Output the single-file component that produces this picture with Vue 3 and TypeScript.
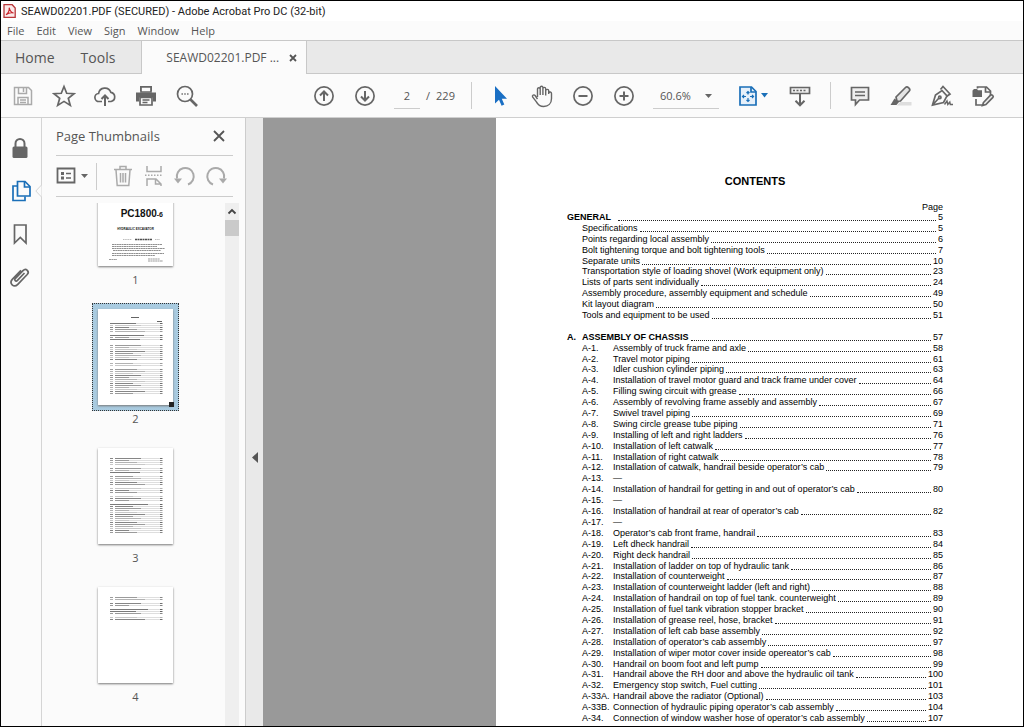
<script setup lang="ts">
import { ref } from 'vue'

interface TocRow {
  kind: 'head' | 'sub' | 'chapter' | 'entry' | 'gap'
  code?: string
  text?: string
  page?: string
}

const menus = ['File', 'Edit', 'View', 'Sign', 'Window', 'Help']
const pageNumber = ref('2')
const zoom = ref('60.6%')

const general: [string, string][] = [
  ['Specifications', '5'],
  ['Points regarding local assembly', '6'],
  ['Bolt tightening torque and bolt tightening tools', '7'],
  ['Separate units', '10'],
  ['Transportation style of loading shovel (Work equipment only)', '23'],
  ['Lists of parts sent individually', '24'],
  ['Assembly procedure, assembly equipment and schedule', '49'],
  ['Kit layout diagram', '50'],
  ['Tools and equipment to be used', '51'],
]

const chassis: [string, string, string][] = [
  ['A-1.', 'Assembly of truck frame and axle', '58'],
  ['A-2.', 'Travel motor piping', '61'],
  ['A-3.', 'Idler cushion cylinder piping', '63'],
  ['A-4.', 'Installation of travel motor guard and track frame under cover', '64'],
  ['A-5.', 'Filling swing circuit with grease', '66'],
  ['A-6.', 'Assembly of revolving frame assebly and assembly', '67'],
  ['A-7.', 'Swivel travel piping', '69'],
  ['A-8.', 'Swing circle grease tube piping', '71'],
  ['A-9.', 'Installing of left and right ladders', '76'],
  ['A-10.', 'Installation of left catwalk', '77'],
  ['A-11.', 'Installation of right catwalk', '78'],
  ['A-12.', 'Installation of catwalk, handrail beside operator’s cab', '79'],
  ['A-13.', '—', ''],
  ['A-14.', 'Installation of handrail for getting in and out of operator’s cab', '80'],
  ['A-15.', '—', ''],
  ['A-16.', 'Installation of handrail at rear of operator’s cab', '82'],
  ['A-17.', '—', ''],
  ['A-18.', 'Operator’s cab front frame, handrail', '83'],
  ['A-19.', 'Left dheck handrail', '84'],
  ['A-20.', 'Right deck handrail', '85'],
  ['A-21.', 'Installation of ladder on top of hydraulic tank', '86'],
  ['A-22.', 'Installation of counterweight', '87'],
  ['A-23.', 'Installation of counterweight ladder (left and right)', '88'],
  ['A-24.', 'Installation of handrail on top of fuel tank. counterweight', '89'],
  ['A-25.', 'Installation of fuel tank vibration stopper bracket', '90'],
  ['A-26.', 'Installation of grease reel, hose, bracket', '91'],
  ['A-27.', 'Installation of left cab base assembly', '92'],
  ['A-28.', 'Installation of operator’s cab assembly', '97'],
  ['A-29.', 'Installation of wiper motor cover inside opereator’s cab', '98'],
  ['A-30.', 'Handrail on boom foot and left pump', '99'],
  ['A-31.', 'Handrail above the RH door and above the hydraulic oil tank', '100'],
  ['A-32.', 'Emergency stop switch, Fuel cutting', '101'],
  ['A-33A.', 'Handrail above the radiator (Optional)', '103'],
  ['A-33B.', 'Connection of hydraulic piping operator’s cab assembly', '104'],
  ['A-34.', 'Connection of window washer hose of operator’s cab assembly', '107'],
]

const rows: TocRow[] = [
  { kind: 'head', text: 'GENERAL', page: '5' },
  ...general.map(([text, page]): TocRow => ({ kind: 'sub', text, page })),
  { kind: 'gap' },
  { kind: 'chapter', code: 'A.', text: 'ASSEMBLY OF CHASSIS', page: '57' },
  ...chassis.map(([code, text, page]): TocRow => ({ kind: 'entry', code, text, page })),
]

interface Line { y: number; w: number; x: number; o: number; code: boolean }

function lines(from: number, to: number, skip: number[], heads: number[], seed: number): Line[] {
  const out: Line[] = []
  let i = 0
  for (let y = from; y <= to; y += 2, i++) {
    if (skip.includes(i)) continue
    const head = heads.includes(i)
    out.push({
      y,
      x: head ? 12 : 17,
      w: 14 + ((i * 7 + seed) % 5) * 4 + (head ? 8 : 0),
      o: head ? 0.6 : 0.25 + ((i * 3 + seed) % 4) * 0.1,
      code: !head,
    })
  }
  return out
}

const thumbs = [
  { n: 1, lines: [] as Line[] },
  { n: 2, lines: lines(14, 84, [5, 9, 10, 19, 22], [0, 6, 8], 1) },
  { n: 3, lines: lines(10, 85, [4, 8, 14, 18, 22], [7, 23], 3) },
  { n: 4, lines: lines(10, 33, [2, 5, 9], [6, 7], 2) },
]
</script>

<template>
  <div class="window">
    <header class="titlebar">
      <svg class="logo" width="13" height="14" viewBox="0 0 13 14">
        <path d="M1 .7h8.2L12.2 4v9.3H1z" fill="#fbeaea" stroke="#b9363a" stroke-width="1.3" />
        <path d="M3 10.700c2.200-1.600 3.400-4.600 3.200-7 .7 3.200 2 5 4.400 5.300-2.600-.7-5.300.1-7.600 1.700z" fill="none" stroke="#c8252c" stroke-width="1.1" />
      </svg>
      <span>SEAWD02201.PDF (SECURED) - Adobe Acrobat Pro DC (32-bit)</span>
    </header>

    <nav class="menubar">
      <button v-for="m in menus" :key="m" type="button">{{ m }}</button>
    </nav>

    <nav class="tabs">
      <button type="button" class="home">Home</button>
      <button type="button" class="tools">Tools</button>
      <div class="tab">
        <button type="button" class="doc-tab">SEAWD02201.PDF ...</button>
        <button type="button" class="close-tab" aria-label="Close tab">
          <svg width="8" height="8" viewBox="0 0 8 8"><path d="M1 1l6 6M7 1L1 7" stroke="#555" stroke-width="1.8" /></svg>
        </button>
      </div>
    </nav>

    <div class="toolbar">
      <div class="group files">
        <button type="button" aria-label="Save">
          <svg class="ico dim" viewBox="0 0 24 24">
            <path d="M3.5 3.500h14l3 3v14h-17z" />
            <path d="M7.500 3.500v6h8v-6M12.500 4v4M7 20.500v-7h10v7M9 16h6M9 18.500h6" />
          </svg>
        </button>
        <button type="button" aria-label="Star">
          <svg class="ico" viewBox="0 0 24 24"><path d="M12 2.500l2.700 6.800 7.300.4-5.700 4.600 2 7.100-6.300-4-6.300 4 2-7.100L2 9.700l7.300-.4z" /></svg>
        </button>
        <button type="button" aria-label="Upload">
          <svg class="ico" viewBox="0 0 24 24">
            <path d="M9 17.500H6.200a4 4 0 0 1-.6-8 6.300 6.300 0 0 1 12.200-1.200 4.700 4.700 0 0 1 .3 9.200H15" />
            <path d="M12 22V11.500M8.500 15l3.500-3.500 3.500 3.500" stroke-width="2" />
          </svg>
        </button>
        <button type="button" aria-label="Print">
          <svg class="ico" viewBox="0 0 24 24">
            <path class="fill" d="M6 2h12v5H6zM2 8.500h20v9h-3v-4H5v4H2z" />
            <path d="M7 3h10v5H7z" fill="#fbfbfb" />
            <path d="M6 13.500h12v7.500H6z" fill="#fbfbfb" />
            <path d="M8.500 16h7M8.500 18.500h5" stroke-width="1.300" />
          </svg>
        </button>
        <button type="button" aria-label="Find">
          <svg class="ico" viewBox="0 0 24 24">
            <circle cx="10" cy="10" r="7.500" />
            <path d="M15.500 15.500l6.500 6.500" stroke-width="2.600" />
            <path d="M6.500 10h1.400M9.300 10h1.400M12.100 10h1.400" />
          </svg>
        </button>
      </div>

      <div class="group pages">
        <button type="button" aria-label="Previous page">
          <svg class="ico" viewBox="0 0 24 24"><circle cx="12" cy="12" r="9.100" /><path d="M12 17V7.500M8 11.500l4-4 4 4" stroke-width="2" /></svg>
        </button>
        <button type="button" aria-label="Next page">
          <svg class="ico" viewBox="0 0 24 24"><circle cx="12" cy="12" r="9.100" /><path d="M12 7v9.500M8 12.500l4 4 4-4" stroke-width="2" /></svg>
        </button>
        <div class="counter">
          <input v-model="pageNumber" aria-label="Page number" />
          <span>/</span>
          <span>229</span>
        </div>
      </div>

      <div class="group view">
        <button type="button" aria-label="Select">
          <svg class="ico" viewBox="0 0 24 24"><path d="M6 2v17.500l4-3.700 2.600 5.900 2.700-1.200-2.500-5.700h5.200z" fill="#1a6fc4" stroke="none" /></svg>
        </button>
        <button type="button" aria-label="Pan">
          <svg class="ico thin" viewBox="0 0 24 24">
            <path d="M7.500 13V5.200c0-1.900 2.700-1.900 2.700 0V11M10.200 5V3.600c0-1.900 2.700-1.900 2.700 0V11M12.900 4.800c0-1.900 2.800-1.900 2.800 0V11.500M15.700 6.500c.3-1.600 3-1.500 3 .3V10M18.700 9c.5-1.500 2.800-1.200 2.800.5v5c0 5-3.200 8-7.800 8-3.700 0-5.800-1.600-7.300-4.600L2.600 13c-.8-1.700 1.400-2.800 2.500-1.500L7.500 15" />
          </svg>
        </button>
        <button type="button" aria-label="Zoom out">
          <svg class="ico" viewBox="0 0 24 24"><circle cx="12" cy="12" r="9.100" /><path d="M7.500 12h9" stroke-width="2" /></svg>
        </button>
        <button type="button" aria-label="Zoom in">
          <svg class="ico" viewBox="0 0 24 24"><circle cx="12" cy="12" r="9.100" /><path d="M7.500 12h9M12 7.500v9" stroke-width="2" /></svg>
        </button>
      </div>

      <div class="zoom">
        <select v-model="zoom" aria-label="Zoom level">
          <option>60.6%</option>
          <option>100%</option>
        </select>
        <svg width="7" height="4" viewBox="0 0 7 4"><path d="M0 0h7L3.500 4z" fill="#666" /></svg>
      </div>

      <div class="group fit">
        <button type="button" class="wide" aria-label="Fit page">
          <svg class="ico blue" viewBox="0 0 24 24">
            <path d="M4 3h11.500L20 7.500V21H4z" fill="#e6f0fa" />
            <path d="M15 3v5h5" />
            <path d="M12 7.500v3M12 14v3.500M6.500 12.500h3.500M14 12.500h3.500M10.500 9l1.500-1.500L13.500 9M10.500 16l1.500 1.500 1.500-1.500M8 11l-1.500 1.500L8 14M16 11l1.500 1.500L16 14" stroke-width="1.200" />
          </svg>
          <svg width="7" height="5" viewBox="0 0 7 5"><path d="M0 0h7L3.500 4.500z" fill="#1a6fb8" /></svg>
        </button>
        <button type="button" aria-label="Page display">
          <svg class="ico" viewBox="0 0 24 24">
            <path d="M2.500 3.500h19v6h-19z" fill="#eee" />
            <path d="M5 6.500h14" stroke-dasharray="2 1.500" />
            <path d="M12 10v11M7.500 16.800l4.500 4.500 4.500-4.500" stroke-width="2" />
          </svg>
        </button>
      </div>

      <div class="group notes">
        <button type="button" aria-label="Comment">
          <svg class="ico" viewBox="0 0 24 24"><path d="M3.500 3.500h17v12.500h-9L7.500 20.500V16h-4z" fill="#eee" /><path d="M7 8h10M7 11.500h10" stroke-width="1.300" /></svg>
        </button>
        <button type="button" aria-label="Highlight">
          <svg class="ico" viewBox="0 0 24 24">
            <path d="M11 18h11.500v3.500H8z" fill="#dedede" stroke="none" />
            <path d="M7 13L16.500 3.500c1.800-1.700 5.500 1.300 3.800 3.500L11.500 17l-3.500.3z" fill="#e4e4e4" />
            <path class="fill" d="M5.500 14.500l4.500 3.500-2.500 3H1.500z" />
          </svg>
        </button>
        <button type="button" aria-label="Sign">
          <svg class="ico" viewBox="0 0 24 24">
            <path d="M2.500 21L5.500 11l6.500-4.500 5 5.500-3.500 6.500zM2.500 21l6.500-7" />
            <circle cx="9.800" cy="13.400" r="1.200" />
            <path d="M10.500 5.500L13 2.500l7 7.500-3.500 2.500" />
            <path d="M14.500 20.500l2.500-3.500.8 3.500 2-2.500.5 2.500H23" stroke-width="1.400" />
          </svg>
        </button>
        <button type="button" aria-label="Edit document">
          <svg class="ico" viewBox="0 0 24 24">
            <path d="M6.500 4.500V3h9L19.500 7v4M14.500 3v5h5M5 15v6h6" />
            <path class="fill" d="M1.500 6.500L3 5h3l1 1.200h4V13H1.500z" />
            <path d="M12.500 18.500l7-7.300c1.200-1.200 3.500.8 2.400 2.200l-7 7.200-3.400 1z" fill="#eee" />
          </svg>
        </button>
      </div>
    </div>

    <div class="body">
      <aside class="rail">
        <button type="button" aria-label="Security">
          <svg class="ico" viewBox="0 0 24 24"><path d="M7.500 11V7.500a4.500 4.500 0 0 1 9 0V11" stroke-width="2" /><path class="fill" d="M6 10.500h12q1.500 0 1.500 1.500v8.500Q19.500 22 18 22H6q-1.500 0-1.500-1.500V12q0-1.500 1.500-1.500z" /></svg>
        </button>
        <button type="button" aria-label="Page thumbnails" class="current">
          <svg class="ico blue" viewBox="0 0 24 24"><path d="M9.500 2.500h7.500l5 5V17H9.500z" /><path d="M16.500 2.500V8H22M9 7H5v14.500h12V17.500" /></svg>
          <svg class="nub" width="7" height="14" viewBox="0 0 7 14"><path d="M6.500 0v1L.8 7l5.700 6v1" fill="#fbfbfb" stroke="#d5d5d5" /></svg>
        </button>
        <button type="button" aria-label="Bookmarks">
          <svg class="ico" viewBox="0 0 24 24"><path d="M6.500 3h11.500v18l-5.700-5.500L6.500 21z" /></svg>
        </button>
        <button type="button" aria-label="Attachments">
          <svg class="ico" viewBox="0 0 24 24"><path d="M16.500 8l-7.300 7.600c-1.300 1.400-3.300-.5-2-1.900L15 5.600c3-3 7 .8 4.200 3.900l-9.400 9.800c-4 4-9.200-1-5.300-5.100L13 5.400" /></svg>
        </button>
      </aside>

      <section class="panel">
        <div class="panel-head">
          <h2>Page Thumbnails</h2>
          <button type="button" aria-label="Close panel">
            <svg width="12" height="12" viewBox="0 0 12 12"><path d="M1 1l10 10M11 1L1 11" stroke="#555" stroke-width="1.800" /></svg>
          </button>
        </div>
        <div class="panel-tools">
          <button type="button" class="options" aria-label="Options">
            <svg width="20" height="18" viewBox="0 0 20 18" fill="none" stroke="#666">
              <path d="M1.500 1.500h17v14h-17z" stroke-width="1.800" />
              <path d="M5 6.500h3M5 11h3" stroke-width="3" /><path d="M10 6.500h5M10 11h5" stroke-width="1.500" />
            </svg>
            <svg width="7" height="4" viewBox="0 0 7 4"><path d="M0 0h7L3.500 4z" fill="#666" /></svg>
          </button>
          <button type="button" aria-label="Delete pages">
            <svg class="ico dim" viewBox="0 0 24 24"><path d="M3 5.500h18M9 5V2.500h6V5M5 6l1.200 15.500h11.600L19 6M9.500 9v9.500M12 9v9.500M14.500 9v9.500" /></svg>
          </button>
          <button type="button" aria-label="Split pages">
            <svg class="ico dim" viewBox="0 0 24 24"><path d="M5 2v5.500h14V2M5 22v-7h9l5 5v2M13.500 15v5H19" /><path d="M3 11.300h18" stroke-dasharray="1.500 1.500" /></svg>
          </button>
          <button type="button" aria-label="Rotate left">
            <svg class="ico dim" viewBox="0 0 24 24"><path d="M15 20.500a8.500 8.500 0 1 0-11-6" stroke-width="2" /><path d="M1 14.500h8L5 19.500z" fill="#aaa" stroke="none" /></svg>
          </button>
          <button type="button" aria-label="Rotate right">
            <svg class="ico dim" viewBox="0 0 24 24"><path d="M9 20.500a8.500 8.500 0 1 1 11-6" stroke-width="2" /><path d="M15 14.500h8l-4 5z" fill="#aaa" stroke="none" /></svg>
          </button>
        </div>

        <div class="thumb-area">
          <ol class="thumbs">
            <li v-for="t in thumbs" :key="t.n" :class="{ selected: t.n === 2 }">
              <div class="frame">
                <div class="sheet">
                  <template v-if="t.n === 1">
                    <strong>PC1800<small>-6</small></strong>
                    <em>HYDRAULIC EXCAVATOR</em>
                    <svg class="cover" width="75" height="34" viewBox="0 0 75 34" fill="none" stroke="#222">
                      <path d="M25 7.500h9M57 7.500h5" opacity=".3" stroke-dasharray="1.500 .7" />
                      <path d="M37 7.500h17" stroke-width="1.500" opacity=".8" stroke-dasharray="2 .5" />
                      <path d="M14 12.500h50M14 14.500h45M14 16.500h53M15 18.500h48M14 21.500h52M14 23.500h43" opacity=".5" stroke-dasharray="2 .4" />
                      <path d="M11 27.500h8M50 27h12M50 29h15" opacity=".45" stroke-dasharray="2 .4" />
                    </svg>
                  </template>
                  <svg v-else width="75" height="96" viewBox="0 0 75 96" stroke="#222" fill="none">
                    <path v-if="t.n === 2" d="M33 8.500h8M59 12.500h5" opacity=".7" />
                    <g v-for="l in t.lines" :key="l.y">
                      <path :d="`M${l.x} ${l.y + .5}h${l.w}`" :opacity="l.o" />
                      <path :d="`M${l.x + l.w} ${l.y + .5}H62`" opacity=".15" />
                      <path :d="`M62 ${l.y + .5}h2.500`" :opacity="l.o + .1" />
                      <path v-if="l.code" :d="`M12 ${l.y + .5}h3`" :opacity="l.o" />
                    </g>
                  </svg>
                </div>
                <i v-if="t.n === 2" class="corner"></i>
              </div>
              <span>{{ t.n }}</span>
            </li>
          </ol>
          <div class="scroll">
            <svg width="14" height="17" viewBox="0 0 14 17"><path d="M3.500 10.500L7 7l3.500 3.500" fill="none" stroke="#444" stroke-width="1.800" /></svg>
            <div class="grip"></div>
          </div>
        </div>
      </section>

      <button type="button" class="collapse" aria-label="Collapse panel">
        <svg width="6" height="11" viewBox="0 0 6 11"><path d="M6 0v11L0 5.500z" fill="#555" /></svg>
      </button>

      <main class="desk">
        <article class="page">
          <h1>CONTENTS</h1>
          <p class="page-label">Page</p>
          <ol class="toc">
            <li v-for="(r, i) in rows" :key="i" :class="r.kind">
              <span v-if="r.code" class="code">{{ r.code }}</span>
              <span class="text">{{ r.text }}</span>
              <i v-if="r.page" class="leader"></i>
              <span v-if="r.page">{{ r.page }}</span>
            </li>
          </ol>
        </article>
      </main>
    </div>
  </div>
</template>

<style>
body {
  margin: 0;
}
</style>

<style scoped>
* {
  box-sizing: border-box;
}
.window {
  display: flex;
  flex-direction: column;
  height: 100vh;
  overflow: hidden;
  border: 1px solid #000;
  background: #fbfbfb;
  color: #555;
  font-family: "Open Sans", "Noto Sans", sans-serif;
  font-size: 11px;
}
button {
  display: flex;
  align-items: center;
  justify-content: center;
  padding: 0;
  border: 0;
  background: none;
  color: inherit;
  font: inherit;
}
.titlebar {
  display: flex;
  align-items: center;
  gap: 5px;
  height: 20px;
  padding-left: 2px;
  background: #fff;
  color: #222;
  font-family: Roboto, "Open Sans", sans-serif;
}
.menubar {
  display: flex;
  gap: 12px;
  height: 19px;
  padding-left: 6px;
}
.tabs {
  display: flex;
  height: 34px;
  border-top: 1px solid #c8c8c8;
  border-bottom: 1px solid #c8c8c8;
  background: #e9e9e9;
  font-size: 14px;
}
.home {
  padding-left: 14px;
}
.tools {
  padding: 0 26px;
}
.tab {
  display: flex;
  align-items: center;
  gap: 10px;
  height: 33px;
  padding: 0 9px 0 24px;
  border: 1px solid #c8c8c8;
  border-width: 0 1px;
  background: #fbfbfb;
  font-size: 12px;
}
.toolbar {
  display: flex;
  align-items: center;
  height: 44px;
  flex: none;
  padding-left: 10px;
  border-bottom: 1px solid #cfcfcf;
}
.group {
  display: flex;
  align-items: center;
  gap: 17px;
  flex: none;
}
.ico {
  display: block;
  width: 24px;
  height: 24px;
  flex: none;
  fill: none;
  stroke: #666;
  stroke-width: 1.7;
}
.ico.thin {
  stroke-width: 1.4;
}
.ico.dim {
  stroke: #aaa;
  stroke-width: 1.5;
}
.ico.blue {
  stroke: #1a6fb8;
}
.ico .fill {
  fill: #666;
  stroke: none;
}
.pages {
  margin-left: 113px;
}
.counter {
  display: flex;
  align-items: center;
  gap: 6px;
}
.counter input {
  width: 26px;
  height: 26px;
  padding: 0;
  border: 0;
  border-bottom: 1px solid #ccc;
  background: none;
  color: inherit;
  font: inherit;
  text-align: center;
}
.view {
  margin-left: 16px;
  padding-left: 18px;
}
.view,
.notes {
  position: relative;
}
.view::before,
.notes::before {
  content: "";
  position: absolute;
  left: 0;
  width: 1px;
  height: 27px;
  background: #ccc;
}
.zoom {
  position: relative;
  flex: none;
  margin-left: 17px;
}
.zoom select {
  width: 66px;
  height: 26px;
  padding: 0 7px;
  border: 0;
  border-bottom: 1px solid #ccc;
  appearance: none;
  background: none;
  color: inherit;
  font: inherit;
}
.zoom svg {
  position: absolute;
  right: 7px;
  top: 11px;
  pointer-events: none;
}
.fit {
  gap: 20px;
  margin-left: 17px;
}
.wide {
  gap: 1px;
}
.notes {
  margin-left: 18px;
  padding-left: 18px;
}
.body {
  display: flex;
  flex: 1;
  min-height: 0;
}
.rail {
  display: flex;
  flex-direction: column;
  align-items: center;
  gap: 19px;
  width: 41px;
  flex: none;
  padding: 18px 2px 0 0;
  border-right: 1px solid #d5d5d5;
}
.rail button {
  position: relative;
}
.nub {
  position: absolute;
  left: 27px;
  top: 5px;
}
.panel {
  display: flex;
  flex-direction: column;
  width: 204px;
  flex: none;
  padding-left: 14px;
  border-right: 1px solid #ccc;
}
.panel-head {
  display: flex;
  align-items: center;
  justify-content: space-between;
  height: 38px;
  flex: none;
  margin-right: 12px;
  padding: 0 8px 2px 0;
  border-bottom: 1px solid #ccc;
}
h2 {
  margin: 0;
  font-size: 13px;
  font-weight: 400;
}
.panel-tools {
  display: flex;
  align-items: center;
  gap: 7px;
  height: 41px;
  flex: none;
  margin-right: 12px;
  border-bottom: 1px solid #ccc;
}
.options {
  gap: 5px;
  height: 27px;
  margin-right: 7px;
  padding-right: 8px;
  border-right: 1px solid #ccc;
}
.thumb-area {
  display: flex;
  flex: 1;
  min-height: 0;
  margin: 6px 6px 0 0;
}
.thumbs {
  flex: 1;
  margin: 0;
  padding: 0 10px 0 0;
  overflow: hidden;
  list-style: none;
}
.thumbs li {
  display: flex;
  flex-direction: column;
  align-items: center;
  height: 139px;
}
.thumbs li:first-child {
  margin-top: -39px;
}
.frame {
  position: relative;
  padding: 6px;
}
.selected .frame {
  outline: 1px dotted #333;
  outline-offset: -1px;
  background: #a9cbe0;
}
.sheet {
  width: 75px;
  height: 96px;
  background: #fff;
  box-shadow: 0 1px 2px #777;
  color: #111;
}
.sheet svg {
  display: block;
}
.sheet strong {
  display: block;
  padding: 33px 10px 0 0;
  font: bold 10px/22px "Liberation Sans", Arial, sans-serif;
  text-align: right;
  white-space: nowrap;
}
.sheet small {
  font-size: 7px;
}
.sheet em {
  display: block;
  font: normal bold 3px/6px "Liberation Sans", Arial, sans-serif;
  text-align: center;
}
.corner {
  position: absolute;
  right: 5px;
  bottom: 4px;
  width: 5px;
  height: 5px;
  background: #222;
}
.scroll {
  width: 14px;
  background: #efefef;
}
.scroll svg {
  display: block;
}
.grip {
  height: 16px;
  background: #cacaca;
}
.collapse {
  width: 17px;
  flex: none;
  padding-top: 70px;
  background: #e9e9e9;
}
.desk {
  display: flex;
  flex: 1;
  min-width: 0;
  padding-left: 233px;
  background: #999;
}
.page {
  display: flex;
  flex: 1;
  flex-direction: column;
  padding: 56px 80px 3px 71px;
  background: #fff;
  color: #000;
  font: 9px/10px "Liberation Sans", Arial, sans-serif;
}
h1 {
  margin: 0;
  font-size: 11px;
  line-height: 14px;
  text-align: center;
}
.page-label {
  margin: 14px 0 0;
  text-align: right;
}
.toc {
  display: flex;
  flex: 1;
  flex-direction: column;
  justify-content: space-between;
  margin: 0;
  padding: 0;
  list-style: none;
}
.toc li {
  display: flex;
  gap: 2px;
  height: 10px;
  white-space: nowrap;
}
.leader {
  flex: 1;
  height: 9px;
  border-bottom: 1px dotted #222;
}
.head .text,
.chapter .code,
.chapter .text {
  font-weight: 700;
}
.head .text {
  margin-right: 5px;
}
.sub,
.entry {
  padding-left: 15px;
}
.chapter .code {
  width: 13px;
}
.entry .code {
  width: 29px;
}
</style>
